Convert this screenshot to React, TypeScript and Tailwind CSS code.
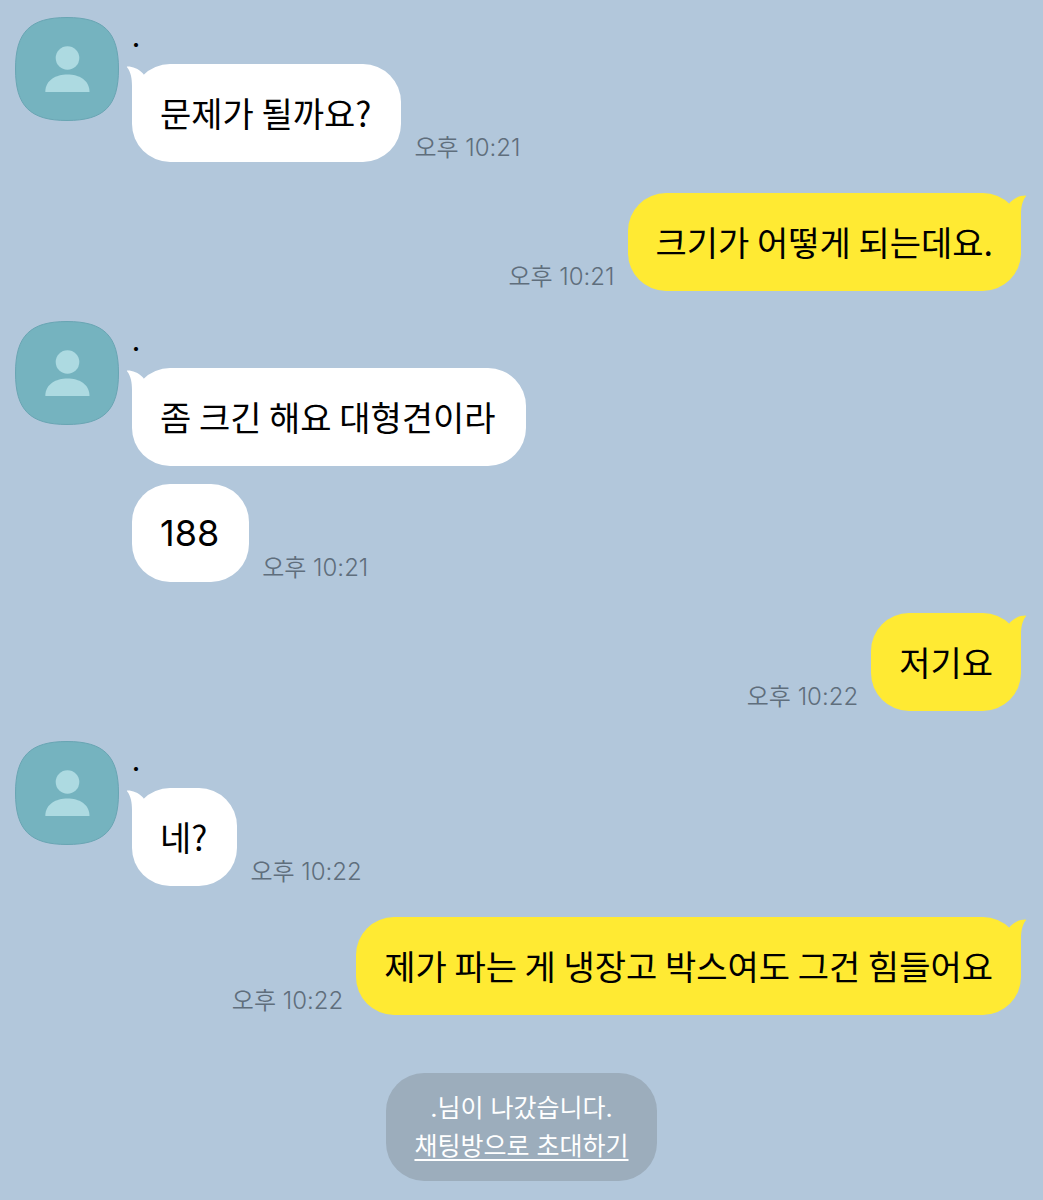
type Message = {
  from: "me" | "them";
  texts: string[];
  time: string;
};

const messages: Message[] = [
  { from: "them", texts: ["문제가 될까요?"], time: "오후 10:21" },
  { from: "me", texts: ["크기가 어떻게 되는데요."], time: "오후 10:21" },
  { from: "them", texts: ["좀 크긴 해요 대형견이라", "188"], time: "오후 10:21" },
  { from: "me", texts: ["저기요"], time: "오후 10:22" },
  { from: "them", texts: ["네?"], time: "오후 10:22" },
  {
    from: "me",
    texts: ["제가 파는 게 냉장고 박스여도 그건 힘들어요"],
    time: "오후 10:22",
  },
];

function Avatar() {
  return (
    <svg viewBox="0 0 104 104" className="size-26 shrink-0" aria-hidden="true">
      <path
        d="M52 .5C89 .5 103.500 15 103.500 52S89 103.500 52 103.500.5 89 .5 52 15 .5 52 .5Z"
        fill="#75b3bf"
        stroke="#69a5b3"
      />
      <circle cx="52.500" cy="41" r="11.800" fill="#addae1" />
      <path d="M30.300 75C30.300 63 41 57.500 52.500 57.500S74.500 63 74.500 75Z" fill="#addae1" />
    </svg>
  );
}

function Tail({ mine }: { mine: boolean }) {
  return (
    <svg
      viewBox="0 0 24 40"
      className={
        mine
          ? "absolute top-0 -right-1.5 h-10 w-6 -scale-x-100 text-[#ffea33]"
          : "absolute top-0 -left-1.5 h-10 w-6 text-white"
      }
      aria-hidden="true"
    >
      <path
        d="M1.500 2.500C7 2.500 12 4.500 17 9.500L20 14V40H6V22C6 15 5 8 1 3.300 .7 2.900 .9 2.500 1.500 2.500Z"
        fill="currentColor"
      />
    </svg>
  );
}

function Bubble({ text, mine, tail }: { text: string; mine: boolean; tail: boolean }) {
  const isNumber = /^\d+$/.test(text);
  return (
    <div
      className={`relative rounded-[38px] py-6 text-black ${
        mine ? "bg-[#ffea33] px-7" : "bg-white pr-[30px] pl-7"
      } ${isNumber ? "text-4xl/[50px]" : "font-['Noto_Sans_CJK_KR',sans-serif] text-[34px]/[50px]"}`}
    >
      {tail && <Tail mine={mine} />}
      <p className="relative">{text}</p>
    </div>
  );
}

function Time({ value }: { value: string }) {
  return (
    <time className="shrink-0 text-2xl/7 font-[350] text-[#5f6e7c]">
      {value}
    </time>
  );
}

function Incoming({ message }: { message: Message }) {
  const last = message.texts.length - 1;
  return (
    <div className="mb-[31px] flex items-start gap-[13px]">
      <Avatar />
      <div className="flex flex-col items-start">
        <span className="h-[47px] pt-1.5 text-2xl font-bold text-black">.</span>
        <div className="flex flex-col items-start gap-[18px]">
          {message.texts.map((text, i) => (
            <div key={text} className="flex items-end gap-[13px]">
              <Bubble text={text} mine={false} tail={i === 0} />
              {i === last && <Time value={message.time} />}
            </div>
          ))}
        </div>
      </div>
    </div>
  );
}

function Outgoing({ message }: { message: Message }) {
  return (
    <div className="mb-[30px] flex flex-col items-end">
      {message.texts.map((text, i) => (
        <div key={text} className="flex items-end gap-[13px]">
          <Time value={message.time} />
          <Bubble text={text} mine tail={i === 0} />
        </div>
      ))}
    </div>
  );
}

export default function App() {
  return (
    <main className="min-h-screen bg-[#b2c7db] pt-[17px] pb-5 font-['Inter','Noto_Sans_CJK_KR',sans-serif]">
      <div className="pr-[22px] pl-[15px]">
        {messages.map((message, i) =>
          message.from === "me" ? (
            <Outgoing key={i} message={message} />
          ) : (
            <Incoming key={i} message={message} />
          )
        )}
      </div>
      <div className="flex justify-center pt-7">
        <div className="flex flex-col items-center rounded-[38px] bg-[#9cadbc] px-7 py-4 text-[25px] leading-[38px] text-white">
          <p>.님이 나갔습니다.</p>
          <button type="button" className="cursor-pointer underline decoration-2 underline-offset-4">
            채팅방으로 초대하기
          </button>
        </div>
      </div>
    </main>
  );
}
